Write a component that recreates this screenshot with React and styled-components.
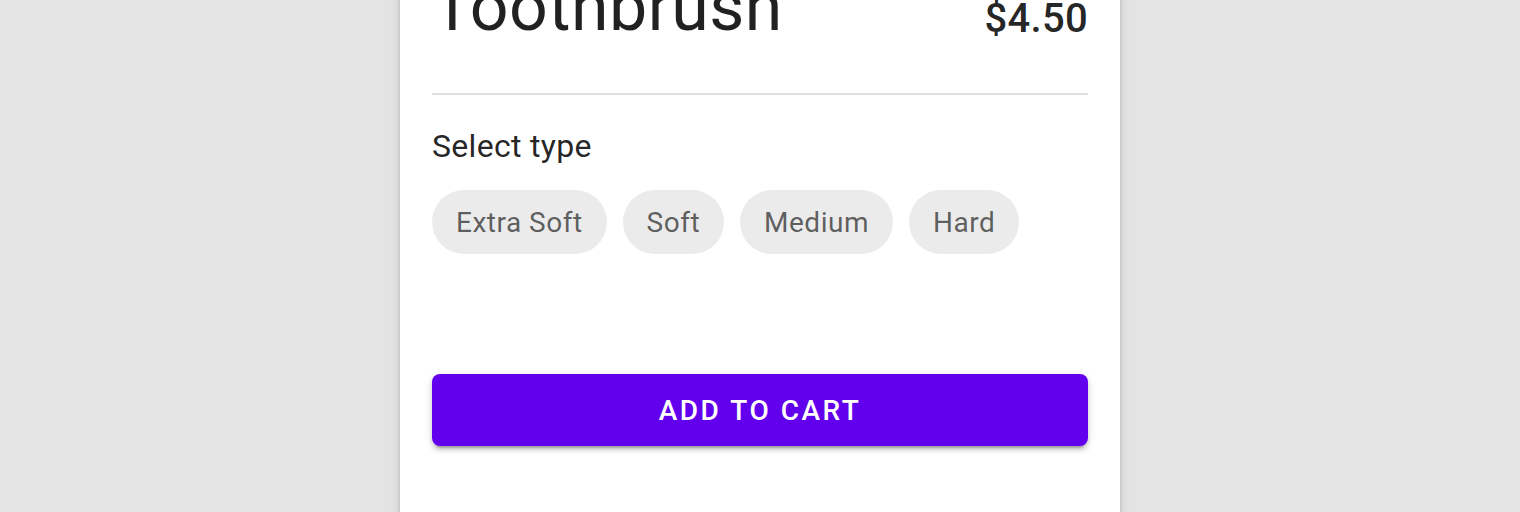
import React from "react";
import styled, { createGlobalStyle } from "styled-components";

const GlobalStyle = createGlobalStyle`
  html, body {
    margin: 0;
    padding: 0;
    background: #e4e4e4;
    overflow: hidden;
  }
  body {
    font-family: Roboto, "Liberation Sans", Arial, sans-serif;
    -webkit-font-smoothing: antialiased;
  }
`;

const Page = styled.div`
  display: flex;
  justify-content: center;
  height: 512px;
`;

const Card = styled.div`
  width: 720px;
  box-sizing: border-box;
  margin-top: -33px;
  padding: 0 32px;
  height: 600px;
  background: #fff;
  box-shadow: 0 4px 2px -2px rgba(0, 0, 0, 0.2), 0 4px 4px 0 rgba(0, 0, 0, 0.14),
    0 2px 10px 0 rgba(0, 0, 0, 0.12);
  display: flex;
  flex-direction: column;
`;

const Header = styled.div`
  display: flex;
  justify-content: space-between;
  align-items: flex-start;
  height: 80px;
`;

const Title = styled.h1`
  margin: 0;
  font-size: 68px;
  line-height: 80px;
  font-weight: 400;
  letter-spacing: 0.5px;
  color: rgba(0, 0, 0, 0.87);
`;

const Price = styled.span`
  margin-top: 20px;
  font-size: 40px;
  line-height: 56px;
  font-weight: 500;
  letter-spacing: 0.3px;
  color: rgba(0, 0, 0, 0.87);
  position: relative;
  top: 4px;
`;

const Divider = styled.hr`
  margin: 46px 0 0;
  border: none;
  height: 2px;
  background: #e0e0e0;
`;

const Label = styled.div`
  margin-top: 23px;
  font-size: 32px;
  line-height: 56px;
  letter-spacing: 0.3px;
  color: rgba(0, 0, 0, 0.87);
`;

const ChipSet = styled.div`
  display: flex;
  gap: 16px;
  margin-top: 16px;
`;

const Chip = styled.button`
  height: 64px;
  padding: 0 24px;
  border: none;
  border-radius: 32px;
  background: #ebebeb;
  color: rgba(0, 0, 0, 0.62);
  font-family: inherit;
  font-size: 28px;
  letter-spacing: 0.5px;
  cursor: pointer;
`;

const CartButton = styled.button`
  margin-top: 120px;
  height: 72px;
  width: 100%;
  border: none;
  border-radius: 8px;
  background: #6200ee;
  color: #fff;
  font-family: inherit;
  font-size: 28px;
  font-weight: 500;
  letter-spacing: 2.5px;
  text-transform: uppercase;
  box-shadow: 0 6px 2px -4px rgba(0, 0, 0, 0.2), 0 4px 4px 0 rgba(0, 0, 0, 0.14),
    0 2px 10px 0 rgba(0, 0, 0, 0.12);
  cursor: pointer;
`;

const types = ["Extra Soft", "Soft", "Medium", "Hard"];

const App = () => {
  return (
    <>
      <GlobalStyle />
      <Page>
        <Card>
          <Header>
            <Title>Toothbrush</Title>
            <Price>$4.50</Price>
          </Header>
          <Divider />
          <Label>Select type</Label>
          <ChipSet>
            {types.map((t) => (
              <Chip key={t}>{t}</Chip>
            ))}
          </ChipSet>
          <CartButton>Add to cart</CartButton>
        </Card>
      </Page>
    </>
  );
};

export default App;
